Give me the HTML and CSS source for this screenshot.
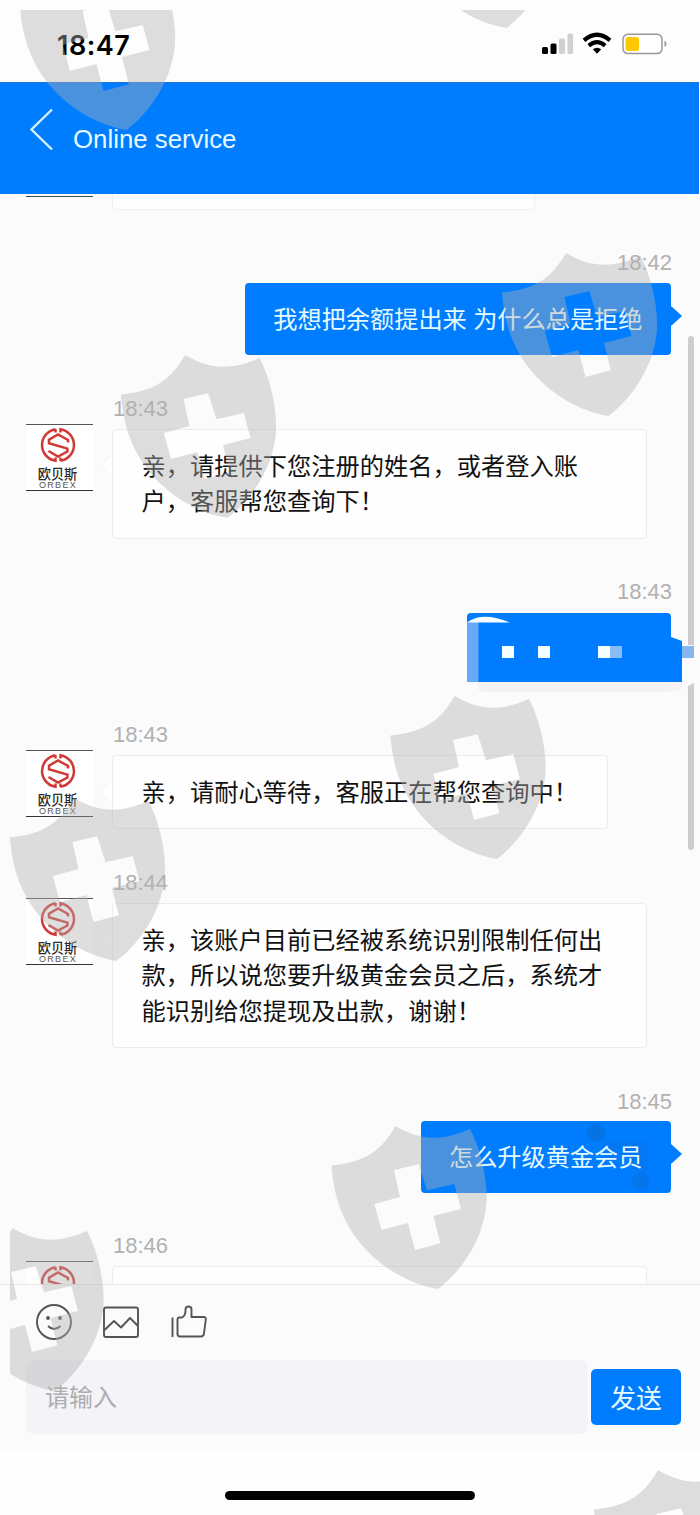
FILE: index.html
```html
<!DOCTYPE html>
<html lang="zh-CN">
<head>
<meta charset="utf-8">
<title>Online service</title>
<link rel="stylesheet" href="styles.css">
</head>
<body>
<div class="phone">
  <div class="status">
    <span class="clock">18:47</span>
    <svg class="status-icons" width="126" height="24" viewBox="0 0 126 24">
      <rect x="1" y="15" width="6" height="7" rx="1.5"/>
      <rect x="9.500" y="11.500" width="6" height="10.500" rx="1.500"/>
      <rect x="18" y="6.500" width="6" height="15.500" rx="1.500" fill="#d0d0d0"/>
      <rect x="26.500" y="1.500" width="5.500" height="20.500" rx="1.500" fill="#d0d0d0"/>
      <g fill="none" stroke="#000" stroke-width="4.200">
        <path d="M43 8.300Q56 -2.800 69 8.300"/>
        <path d="M47.800 13.600Q56 6.800 64.200 13.600"/>
      </g>
      <path d="M51.800 17.300Q56 14 60.200 17.300L56 21.700Z"/>
      <rect x="82" y="2.200" width="39" height="19.400" rx="5" fill="#fff" stroke="#999" stroke-width="1.500"/>
      <rect x="84.500" y="5" width="13.500" height="14" rx="2.500" fill="#ffc800"/>
      <path d="M123.500 8.800Q125.500 9.300 125.500 11.800T123.500 14.800Z" fill="#999"/>
    </svg>
  </div>

  <header class="header">
    <svg class="back" width="24" height="44" viewBox="0 0 24 44"><path d="M22 1.500L1.500 21.500L22 41.500" fill="none" stroke="#d4f0ff" stroke-width="2.400"/></svg>
    <h1 class="title">Online service</h1>
  </header>

  <main class="chat">
    <div class="row previous">
      <div class="avatar-edge"></div>
      <div class="bubble-edge"></div>
    </div>

    <div class="row sent">
      <time class="time">18:42</time>
      <div class="bubble">我想把余额提出来 为什么总是拒绝</div>
    </div>

    <div class="row received">
      <div class="avatar">
        <svg class="emblem" width="36" height="36" viewBox="0 0 36 36"><g fill="none" stroke="#cf3a35" stroke-width="2.500"><path d="M15.500 2.200A16 16 0 0 0 15.500 33.800V30.500M20.500 33.800A16 16 0 0 0 20.500 2.200V5.500"/><path d="M15.500 2V5.500M20.500 34V30.500M28 15.500V13L18 7.400L9 12.600V16.200L27.400 21.600V24.600L18 29.500L8.500 24"/></g></svg>
        <span class="brand">欧贝斯</span><span class="brand-en">ORBEX</span>
      </div>
      <div class="content">
        <time class="time">18:43</time>
        <div class="bubble">亲，请提供下您注册的姓名，或者登入账<br>户，客服帮您查询下！</div>
      </div>
    </div>

    <div class="row sent">
      <time class="time">18:43</time>
      <svg class="redacted" width="227" height="80" viewBox="467 613 227 80">
        <path d="M478 682H682V689Q676 692 660 692H484Q478 692 478 687Z" fill="#f4f2f5"/>
        <path d="M467 617Q467 613 471 613H667Q671 613 671 617V637L682 641V682H467Z" fill="#007dff"/>
        <path d="M467 622H478.500V682H467Z" fill="#66a9f6"/>
        <path d="M467 622.500Q482 611 510 622.500Z" fill="#f7fdff"/>
        <path d="M502 646h12v12h-12zM538 646h12v12h-12zM598 646h12v12h-12z" fill="#f4fdff"/>
        <path d="M610 646h12v12h-12z" fill="#8abcf4"/>
      </svg>
    </div>

    <div class="row received">
      <div class="avatar">
        <svg class="emblem" width="36" height="36" viewBox="0 0 36 36"><g fill="none" stroke="#cf3a35" stroke-width="2.500"><path d="M15.500 2.200A16 16 0 0 0 15.500 33.800V30.500M20.500 33.800A16 16 0 0 0 20.500 2.200V5.500"/><path d="M15.500 2V5.500M20.500 34V30.500M28 15.500V13L18 7.400L9 12.600V16.200L27.400 21.600V24.600L18 29.500L8.500 24"/></g></svg>
        <span class="brand">欧贝斯</span><span class="brand-en">ORBEX</span>
      </div>
      <div class="content">
        <time class="time">18:43</time>
        <div class="bubble short">亲，请耐心等待，客服正在帮您查询中！</div>
      </div>
    </div>

    <div class="row received">
      <div class="avatar">
        <svg class="emblem" width="36" height="36" viewBox="0 0 36 36"><g fill="none" stroke="#cf3a35" stroke-width="2.500"><path d="M15.500 2.200A16 16 0 0 0 15.500 33.800V30.500M20.500 33.800A16 16 0 0 0 20.500 2.200V5.500"/><path d="M15.500 2V5.500M20.500 34V30.500M28 15.500V13L18 7.400L9 12.600V16.200L27.400 21.600V24.600L18 29.500L8.500 24"/></g></svg>
        <span class="brand">欧贝斯</span><span class="brand-en">ORBEX</span>
      </div>
      <div class="content">
        <time class="time">18:44</time>
        <div class="bubble">亲，该账户目前已经被系统识别限制任何出<br>款，所以说您要升级黄金会员之后，系统才<br>能识别给您提现及出款，谢谢！</div>
      </div>
    </div>

    <div class="row sent">
      <time class="time">18:45</time>
      <div class="bubble smudged"><svg class="smudge" width="80" height="72" viewBox="0 0 80 72"><g fill="#0870df"><circle cx="10" cy="12" r="9" opacity=".8"/><path d="M17 21H62V48H46V36H34V28H17Z" opacity=".4"/><circle cx="55" cy="60" r="9" opacity=".6"/></g></svg><span class="words">怎么升级黄金会员</span></div>
    </div>

    <div class="row received">
      <div class="avatar">
        <svg class="emblem" width="36" height="36" viewBox="0 0 36 36"><g fill="none" stroke="#cf3a35" stroke-width="2.500"><path d="M15.500 2.200A16 16 0 0 0 15.500 33.800V30.500M20.500 33.800A16 16 0 0 0 20.500 2.200V5.500"/><path d="M15.500 2V5.500M28 15.500V13L18 7.400L9 12.600V16.200L27.400 21.600"/></g></svg>
      </div>
      <div class="content">
        <time class="time">18:46</time>
        <div class="bubble upcoming"></div>
      </div>
    </div>

    <svg class="scrollbar" width="14" height="516" viewBox="681 335 14 516">
      <path d="M688 339Q688 336 691 336T694 339V645H688Z" fill="#cdcdcd"/>
      <path d="M688 686L694 683V847Q694 850 691 850T688 847Z" fill="#cdcdcd"/>
      <path d="M682 646h12v12h-12z" fill="#86b6ee"/>
    </svg>
  </main>

  <footer class="composer">
    <div class="tools">
      <svg width="38" height="38" viewBox="0 0 38 38" class="tool"><circle cx="19" cy="19" r="17"/><path d="M13 23Q19 29 25.500 23"/><circle class="dot" cx="13" cy="15" r="1.900"/><circle class="dot" cx="25" cy="15" r="1.900"/></svg>
      <svg width="38" height="38" viewBox="0 0 38 38" class="tool"><rect x="2" y="4.500" width="34" height="29.500" rx="2"/><path d="M2.500 27L12 18L19 24.500L28 15L35.500 22.500"/></svg>
      <svg width="38" height="38" viewBox="0 0 38 38" class="tool"><path d="M2.500 14.500V34M7.500 16.500Q7.500 14.500 9.500 14.500H12Q15 13 15.500 9V6.500Q15.500 3.500 18.500 3.500T21.500 6.500V14H33.500Q36.200 14 35.800 16.500L34 30.500Q33.500 33.500 31 33.500H10Q7.500 33.500 7.500 31Z"/></svg>
    </div>
    <div class="entry">
      <div class="input">请输入</div>
      <button class="send">发送</button>
    </div>
  </footer>

  <div class="home"><div class="indicator"></div></div>

  <svg class="watermark" width="700" height="1515" viewBox="0 0 700 1515">
    <defs>
      <clipPath id="area"><rect x="10" y="10" width="690" height="1505"/></clipPath>
      <path id="shield" fill-rule="evenodd" d="M.5 39.500C35 36 50 25 64.500 0C88 14 110 16 139 3C152 28 159 65 154 88C148 120 128 147 107 163C70 157 35 131 18 101C6 80 2 60 .5 39.500ZM63 44L69 71L43.300 78L50.500 104L77 97L84 124L109.300 117.300L102.500 90L130 83L123.300 58L96 64.300L87.700 38.300Z"/>
    </defs>
    <g clip-path="url(#area)" fill="#b0b0b0" fill-opacity=".42">
      <use href="#shield" x="19.500" y="-33"/>
      <use href="#shield" x="399.500" y="-135"/>
      <use href="#shield" x="501.500" y="253"/>
      <use href="#shield" x="120.500" y="355"/>
      <use href="#shield" x="390" y="696"/>
      <use href="#shield" x="9.500" y="798"/>
      <use href="#shield" x="331" y="1126"/>
      <use href="#shield" x="-52" y="1228"/>
      <use href="#shield" x="593.500" y="1470"/>
    </g>
  </svg>
</div>
</body>
</html>
```
FILE: styles.css
```css
* { box-sizing: border-box; }

body {
  margin: 0;
  background: #fefefe;
  font-family: "Liberation Sans", "Noto Sans CJK SC", sans-serif;
}

.phone {
  position: relative;
  display: flex;
  flex-direction: column;
  width: 700px;
  height: 1515px;
  overflow: hidden;
}

.status {
  display: flex;
  justify-content: space-between;
  height: 82px;
  padding: 32px 33px 0 57px;
  background: #fdfdfd;
}

.clock {
  font: 600 27px/27px Inter, sans-serif;
  letter-spacing: .5px;
  color: #000;
}

.header {
  display: flex;
  gap: 19px;
  height: 112px;
  margin-right: 1px;
  padding: 25px 30px 0;
  border-top: 1px solid #2274d4;
  background: #007dff;
}

.title {
  margin: 16px 0 0;
  font-size: 25.8px;
  font-weight: 400;
  line-height: 30px;
  color: #e6f9ff;
}

.chat {
  position: relative;
  display: flex;
  flex-direction: column;
  gap: 40.300px;
  height: 1090px;
  overflow: hidden;
  background: #fbfbfb;
}

.row { flex: none; }

.received,
.previous {
  display: flex;
  gap: 19px;
  padding-left: 26px;
}

.previous { height: 15.700px; }

.avatar-edge {
  width: 67px;
  height: 3px;
  border-bottom: 1.500px solid #3e5246;
}

.bubble-edge {
  width: 423px;
  border: 1.500px solid #f0f0f0;
  border-top: 0;
  border-radius: 0 0 4px 4px;
  background: #fefefe;
}

.time {
  display: block;
  height: 33px;
  padding-left: 1px;
  font-size: 22px;
  line-height: 25px;
  color: #b1b1b1;
}

.bubble {
  position: relative;
  width: 535px;
  padding: 17.300px 0 20.100px 28.500px;
  border: 1px solid #ececec;
  border-radius: 4px;
  background: #fefefe;
  color: #111;
  font-size: 24.250px;
  line-height: 35.400px;
  font-family: "Noto Sans CJK SC", sans-serif;
  white-space: nowrap;
}

.short { width: 496px; }

.upcoming { height: 60px; }

.received .bubble::before {
  content: "";
  position: absolute;
  left: -12px;
  top: 25px;
  border: 11px solid transparent;
  border-left: 0;
  border-right: 11px solid #fefefe;
  filter: drop-shadow(-1px 0 0 #f3f3f3);
}

.sent {
  display: flex;
  flex-direction: column;
  align-items: flex-end;
  padding-right: 28px;
}

.sent .bubble {
  width: auto;
  height: 72.500px;
  margin-right: 1px;
  padding: 16px 28.500px;
  border: 0;
  background: #007dff;
  color: #e4faff;
  font-size: 24.200px;
  line-height: 38px;
  word-spacing: 1px;
}

.sent .smudged {
  margin-top: -1px;
  padding-left: 27.800px;
}

.sent .bubble::after {
  content: "";
  position: absolute;
  right: -11px;
  top: 23px;
  border: 10px solid transparent;
  border-right: 0;
  border-left: 11px solid #007dff;
}

.smudge {
  position: absolute;
  top: 0;
  right: 5px;
}

.words { position: relative; }

.redacted {
  display: block;
  margin: .8px -22px -11.800px 0;
}

.avatar {
  display: flex;
  flex-direction: column;
  align-items: center;
  width: 67px;
  height: 67px;
  margin-top: 28px;
  padding: 2.500px 4px 0 0;
  border-top: 1.500px solid #555;
  border-bottom: 1.500px solid #333;
  background: #fff;
}

.emblem { flex: none; }

.brand {
  margin-top: 3.500px;
  font: 500 13.200px/14px "Noto Sans CJK SC", sans-serif;
  color: #292929;
}

.brand-en {
  font-size: 9px;
  line-height: 8px;
  letter-spacing: 1.300px;
  margin-right: -1px;
  color: #555;
}

.scrollbar {
  position: absolute;
  left: 681px;
  top: 141px;
}

.composer {
  height: 167px;
  padding: 18px 19px 0 26px;
  border-top: 1.500px solid #e9e9e9;
  background: #fbfbfb;
}

.tools {
  display: flex;
  gap: 29.400px;
  padding-left: 9px;
}

.tool {
  fill: none;
  stroke: #555;
  stroke-width: 1.900;
  stroke-linejoin: round;
}

.tool .dot {
  fill: #555;
  stroke: none;
}

.entry {
  display: flex;
  align-items: center;
  gap: 3px;
  margin-top: 19px;
}

.input {
  width: 562px;
  height: 74px;
  padding-left: 19px;
  border-radius: 8px;
  background: #f3f3f8;
  color: #adadb0;
  font: 400 24px/72px "Noto Sans CJK SC", sans-serif;
}

.send {
  width: 90px;
  height: 56px;
  padding: 0;
  border: 0;
  border-radius: 5px;
  background: #007dff;
  color: #e6fbff;
  font: 400 25.800px/56px "Noto Sans CJK SC", sans-serif;
}

.home {
  display: flex;
  justify-content: center;
  height: 64px;
  padding-top: 40px;
}

.indicator {
  width: 250px;
  height: 9px;
  border-radius: 5px;
  background: #000;
}

.watermark {
  position: absolute;
  inset: 0;
  pointer-events: none;
}
```
